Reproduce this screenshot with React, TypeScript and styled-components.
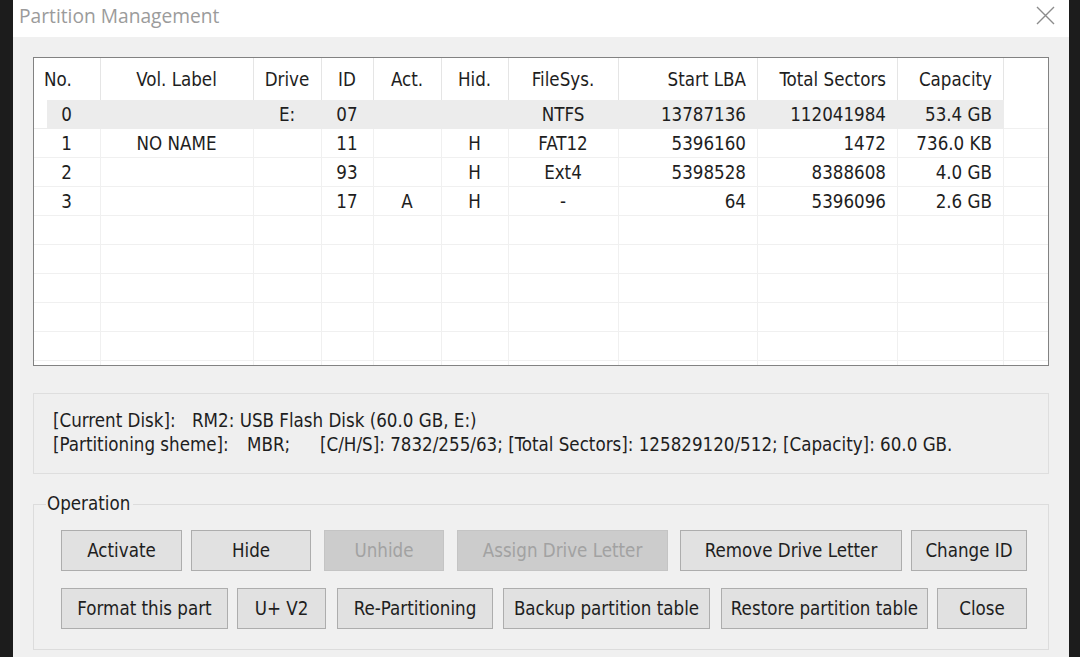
import React from 'react';
import styled, { createGlobalStyle } from 'styled-components';

const GlobalStyle = createGlobalStyle`
  html, body {
    margin: 0;
    padding: 0;
    background: #1c1c1c;
  }
  * {
    box-sizing: border-box;
  }
`;

const UI_FONT = `"DejaVu Sans Condensed", "DejaVu Sans", sans-serif`;

const Screen = styled.div`
  display: flex;
  width: 1080px;
  height: 657px;
  padding: 0 12px 0 13px;
  background: #1c1c1c;
  overflow: hidden;
`;

const Window = styled.div`
  flex: 1;
  display: flex;
  flex-direction: column;
  font-family: ${UI_FONT};
  font-size: 18.6px;
  color: #1e1e1e;
`;

const TitleBar = styled.div`
  height: 37px;
  flex: none;
  display: flex;
  align-items: center;
  justify-content: space-between;
  padding: 0 14px 0 6px;
  background: #ffffff;
`;

const Title = styled.span`
  font-family: "Open Sans", sans-serif;
  font-stretch: normal;
  font-size: 19.2px;
  color: #9b9b9b;
  margin-top: -7px;
`;

const CloseButton = styled.span`
  display: flex;
  width: 19px;
  height: 19px;
  margin-top: -6px;
`;

const Body = styled.div`
  flex: 1;
  display: flex;
  flex-direction: column;
  padding: 20px 20px 0 20px;
  background: #f0f0f0;
`;

const ListView = styled.div`
  height: 309px;
  flex: none;
  border: 1px solid #828282;
  background: #ffffff;
  overflow: hidden;
`;

const COLUMNS = '67px 153px 68px 52px 68px 67px 110px 139px 140px 106px 1fr';

const HeaderRow = styled.div`
  display: grid;
  grid-template-columns: ${COLUMNS};
  height: 42px;
`;

type Align = 'left' | 'center' | 'right';

const justify = (a: Align) =>
  a === 'left' ? 'flex-start' : a === 'right' ? 'flex-end' : 'center';

const HeaderCell = styled.div<{ $align: Align; $last?: boolean }>`
  display: flex;
  align-items: center;
  justify-content: ${(p) => justify(p.$align)};
  padding: 0 11px 0 10px;
  border-right: ${(p) => (p.$last ? 'none' : '1px solid #e5e5e5')};
  white-space: nowrap;
`;

const Row = styled.div`
  display: grid;
  grid-template-columns: ${COLUMNS};
  height: 29px;
`;

const Cell = styled.div<{ $align: Align; $selected?: boolean; $first?: boolean; $filler?: boolean }>`
  display: flex;
  align-items: center;
  justify-content: ${(p) => justify(p.$align)};
  padding: 0 11px 0 10px;
  white-space: nowrap;
  border-bottom: 1px solid ${(p) => (p.$selected && !p.$filler ? '#ececec' : '#f0f0f0')};
  border-right: ${(p) =>
    p.$filler ? 'none' : `1px solid ${p.$selected ? '#ececec' : '#f0f0f0'}`};
  background: ${(p) =>
    !p.$selected || p.$filler
      ? 'transparent'
      : p.$first
      ? 'linear-gradient(to right, #ffffff 13px, #ececec 13px)'
      : '#ececec'};
`;

const InfoPanel = styled.div`
  flex: none;
  margin-top: 27px;
  height: 81px;
  padding: 15px 19px 0 19px;
  border: 1px solid #dedede;
  background: #efefef;
  line-height: 24px;
`;

const InfoLine = styled.div`
  display: flex;
  white-space: nowrap;
`;

const InfoField = styled.span<{ $w?: number }>`
  flex: none;
  width: ${(p) => (p.$w ? `${p.$w}px` : 'auto')};
`;

const GroupBox = styled.fieldset`
  flex: none;
  margin: 18px 0 0 0;
  padding: 14px 21px 20px 12px;
  border: 1px solid #dcdcdc;
  min-inline-size: 0;
`;

const Legend = styled.legend`
  padding: 0 3px 0 1px;
  line-height: 24px;
`;

const ButtonRow = styled.div`
  display: flex;
  padding-left: 15px;
  & + & {
    margin-top: 17px;
  }
`;

const Button = styled.button<{ $w: number; $gap: number }>`
  width: ${(p) => p.$w}px;
  height: 41px;
  margin-left: ${(p) => p.$gap}px;
  padding: 0;
  font-family: ${UI_FONT};
  font-size: 18.6px;
  color: #1e1e1e;
  background: #e1e1e1;
  border: 1px solid #adadad;
  white-space: nowrap;

  &:disabled {
    color: #a2a2a2;
    background: #cccccc;
    border-color: #c4c4c4;
  }
`;

type Column = { title: string; align: Align; cellAlign: Align };

const columns: Column[] = [
  { title: 'No.', align: 'left', cellAlign: 'center' },
  { title: 'Vol. Label', align: 'center', cellAlign: 'center' },
  { title: 'Drive', align: 'center', cellAlign: 'center' },
  { title: 'ID', align: 'center', cellAlign: 'center' },
  { title: 'Act.', align: 'center', cellAlign: 'center' },
  { title: 'Hid.', align: 'center', cellAlign: 'center' },
  { title: 'FileSys.', align: 'center', cellAlign: 'center' },
  { title: 'Start LBA', align: 'right', cellAlign: 'right' },
  { title: 'Total Sectors', align: 'right', cellAlign: 'right' },
  { title: 'Capacity', align: 'right', cellAlign: 'right' },
];

const partitions: string[][] = [
  ['0', '', 'E:', '07', '', '', 'NTFS', '13787136', '112041984', '53.4 GB'],
  ['1', 'NO NAME', '', '11', '', 'H', 'FAT12', '5396160', '1472', '736.0 KB'],
  ['2', '', '', '93', '', 'H', 'Ext4', '5398528', '8388608', '4.0 GB'],
  ['3', '', '', '17', 'A', 'H', '-', '64', '5396096', '2.6 GB'],
];

const EMPTY_ROWS = 6;

const firstRow = [
  { label: 'Activate', w: 121, gap: 0 },
  { label: 'Hide', w: 120, gap: 9 },
  { label: 'Unhide', w: 120, gap: 13, disabled: true },
  { label: 'Assign Drive Letter', w: 211, gap: 13, disabled: true },
  { label: 'Remove Drive Letter', w: 222, gap: 12 },
  { label: 'Change ID', w: 116, gap: 9 },
];

const secondRow = [
  { label: 'Format this part', w: 167, gap: 0 },
  { label: 'U+ V2', w: 89, gap: 9 },
  { label: 'Re-Partitioning', w: 156, gap: 11 },
  { label: 'Backup partition table', w: 207, gap: 10 },
  { label: 'Restore partition table', w: 207, gap: 11 },
  { label: 'Close', w: 90, gap: 9 },
];

const CloseIcon = () => (
  <svg width="19" height="19" viewBox="0 0 19 19">
    <path d="M1 1 L18 18 M18 1 L1 18" stroke="#8c8c8c" strokeWidth="1.4" fill="none" />
  </svg>
);

const App: React.FC = () => {
  const rows = [
    ...partitions,
    ...Array.from({ length: EMPTY_ROWS }, () => columns.map(() => '')),
  ];

  return (
    <>
      <GlobalStyle />
      <Screen>
        <Window>
          <TitleBar>
            <Title>Partition Management</Title>
            <CloseButton>
              <CloseIcon />
            </CloseButton>
          </TitleBar>
          <Body>
            <ListView>
              <HeaderRow>
                {columns.map((c) => (
                  <HeaderCell key={c.title} $align={c.align}>
                    {c.title}
                  </HeaderCell>
                ))}
                <HeaderCell $align="left" $last />
              </HeaderRow>
              {rows.map((r, i) => (
                <Row key={i}>
                  {r.map((v, j) => (
                    <Cell
                      key={j}
                      $align={columns[j].cellAlign}
                      $selected={i === 0}
                      $first={j === 0}
                    >
                      {v}
                    </Cell>
                  ))}
                  <Cell $align="left" $filler $selected={i === 0} />
                </Row>
              ))}
            </ListView>

            <InfoPanel>
              <InfoLine>
                <InfoField $w={139}>[Current Disk]:</InfoField>
                <InfoField>RM2: USB Flash Disk (60.0 GB, E:)</InfoField>
              </InfoLine>
              <InfoLine>
                <InfoField $w={194}>[Partitioning sheme]:</InfoField>
                <InfoField $w={73}>MBR;</InfoField>
                <InfoField>
                  [C/H/S]: 7832/255/63; [Total Sectors]: 125829120/512; [Capacity]: 60.0 GB.
                </InfoField>
              </InfoLine>
            </InfoPanel>

            <GroupBox>
              <Legend>Operation</Legend>
              <ButtonRow>
                {firstRow.map((b) => (
                  <Button key={b.label} $w={b.w} $gap={b.gap} disabled={b.disabled}>
                    {b.label}
                  </Button>
                ))}
              </ButtonRow>
              <ButtonRow>
                {secondRow.map((b) => (
                  <Button key={b.label} $w={b.w} $gap={b.gap}>
                    {b.label}
                  </Button>
                ))}
              </ButtonRow>
            </GroupBox>
          </Body>
        </Window>
      </Screen>
    </>
  );
};

export default App;
